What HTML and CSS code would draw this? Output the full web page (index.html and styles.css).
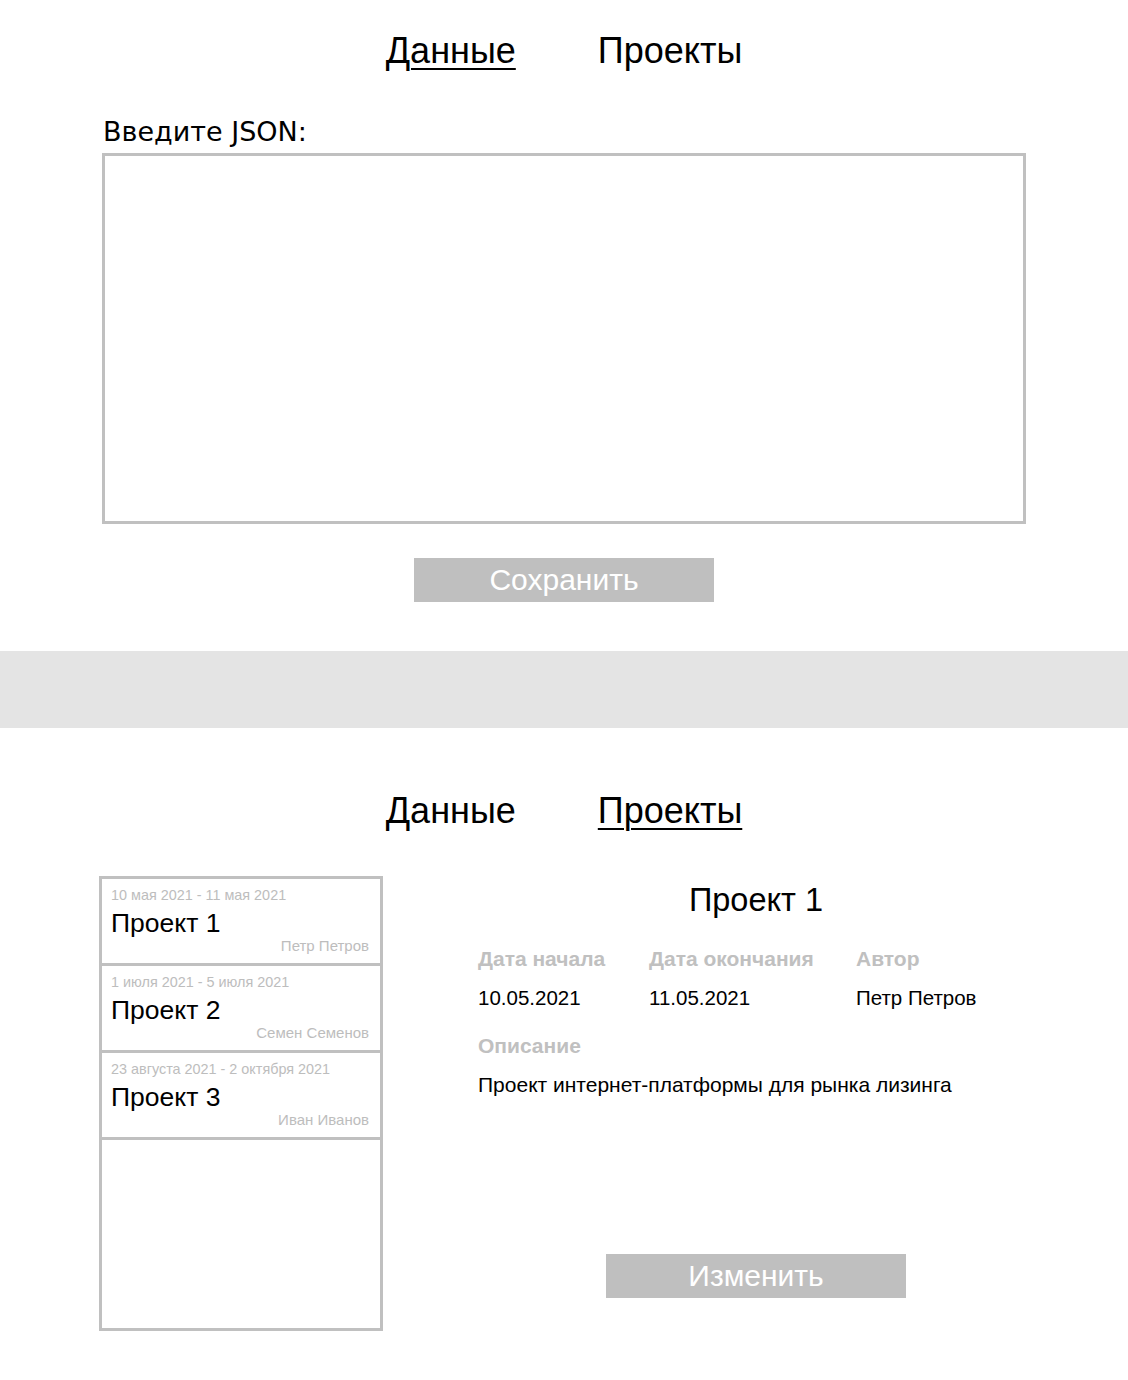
FILE: index.html
```html
<!DOCTYPE html>
<html lang="ru">
<head>
    <meta charset="UTF-8">
    <title>Проекты</title>
    <link rel="stylesheet" href="styles.css">
</head>
<body>

<section class="page page-data">
    <nav class="tabs">
        <a class="tab active" href="#">Данные</a>
        <a class="tab" href="#">Проекты</a>
    </nav>
    <div class="json-form">
        <label class="json-label" for="json">Введите JSON:</label>
        <textarea id="json" class="json-input"></textarea>
        <div class="btn-row">
            <button class="btn">Сохранить</button>
        </div>
    </div>
</section>

<div class="divider"></div>

<section class="page page-projects">
    <nav class="tabs">
        <a class="tab" href="#">Данные</a>
        <a class="tab active" href="#">Проекты</a>
    </nav>
    <div class="projects">
        <ul class="project-list">
            <li class="project-item">
                <div class="item-dates">10 мая 2021 - 11 мая 2021</div>
                <div class="item-title">Проект 1</div>
                <div class="item-author">Петр Петров</div>
            </li>
            <li class="project-item">
                <div class="item-dates">1 июля 2021 - 5 июля 2021</div>
                <div class="item-title">Проект 2</div>
                <div class="item-author">Семен Семенов</div>
            </li>
            <li class="project-item">
                <div class="item-dates">23 августа 2021 - 2 октября 2021</div>
                <div class="item-title">Проект 3</div>
                <div class="item-author">Иван Иванов</div>
            </li>
        </ul>
        <div class="project-detail">
            <h2 class="detail-title">Проект 1</h2>
            <div class="detail-grid">
                <div class="field-label">Дата начала</div>
                <div class="field-label">Дата окончания</div>
                <div class="field-label">Автор</div>
                <div class="field-value">10.05.2021</div>
                <div class="field-value">11.05.2021</div>
                <div class="field-value">Петр Петров</div>
            </div>
            <div class="field-label">Описание</div>
            <div class="field-value description">Проект интернет-платформы для рынка лизинга</div>
            <div class="btn-row detail-btn">
                <button class="btn">Изменить</button>
            </div>
        </div>
    </div>
</section>

</body>
</html>
```

FILE: styles.css
```css
body {
    margin: 0;
    padding: 0;
    background: #fff;
    color: #000;
    font-family: 'Liberation Sans', Arial, sans-serif;
}
.tabs {
    display: flex;
    justify-content: center;
    gap: 82px;
    font-size: 36px;
    line-height: 42px;
}
.tab {
    color: #000;
    text-decoration: none;
}
.tab.active {
    text-decoration: underline;
    text-decoration-thickness: 2px;
    text-underline-offset: 5px;
}
/* Data page */
.page-data {
    padding-top: 30px;
    height: 621px;
    box-sizing: border-box;
}
.json-form {
    width: 924px;
    margin: 44px auto 0;
}
.json-label {
    display: block;
    font-family: 'DejaVu Sans', sans-serif;
    font-size: 27px;
    line-height: 32px;
    margin-bottom: 5px;
    padding-left: 1px;
}
.json-input {
    display: block;
    width: 924px;
    height: 371px;
    box-sizing: border-box;
    border: 3px solid #c0c0c0;
    resize: none;
    margin: 0;
    outline: none;
}
.btn-row {
    display: flex;
    justify-content: center;
    margin-top: 34px;
}
.btn {
    width: 300px;
    height: 44px;
    border: none;
    background: #bfbfbf;
    color: #fff;
    font-family: 'Liberation Sans', Arial, sans-serif;
    font-size: 30px;
    padding: 0;
    cursor: pointer;
}
.divider {
    height: 77px;
    background: #e4e4e4;
    margin-top: 30px;
}
/* Projects page */
.page-projects {
    padding-top: 62px;
}
.projects {
    display: flex;
    margin: 44px 0 0 99px;
}
.project-list {
    list-style: none;
    margin: 0;
    padding: 0;
    width: 284px;
    height: 455px;
    box-sizing: border-box;
    border: 3px solid #c0c0c0;
}
.project-item {
    height: 87px;
    box-sizing: border-box;
    border-bottom: 3px solid #c0c0c0;
    padding: 7px 11px 0 9px;
}
.item-dates {
    font-size: 14.4px;
    line-height: 18px;
    color: #bdbdbd;
}
.item-title {
    font-size: 26.5px;
    line-height: 30px;
    margin-top: 4px;
}
.item-author {
    font-size: 15px;
    line-height: 18px;
    color: #bdbdbd;
    text-align: right;
    margin-top: -1px;
}
.project-detail {
    width: 556px;
    margin-left: 95px;
}
.detail-title {
    text-align: center;
    font-weight: normal;
    font-size: 32.5px;
    line-height: 40px;
    margin: 4px 0 27px;
}
.detail-grid {
    display: grid;
    grid-template-columns: 171px 207px auto;
    margin-bottom: 24px;
}
.field-label {
    font-size: 21px;
    font-weight: bold;
    color: #c0c0c0;
    line-height: 24px;
}
.field-value {
    font-size: 20.5px;
    line-height: 24px;
    margin-top: 15px;
}
.description {
    font-size: 21px;
}
.detail-btn {
    margin-top: 157px;
}
```
